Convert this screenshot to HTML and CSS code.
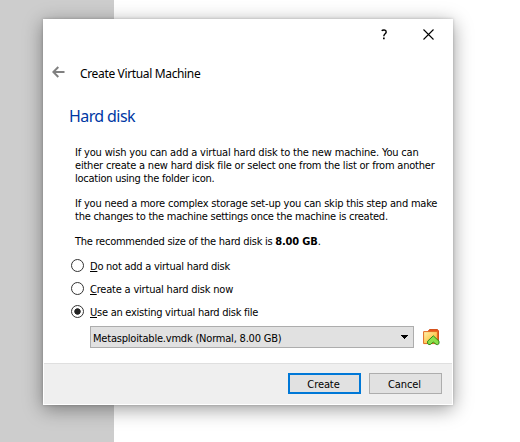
FILE: index.html
```html
<!DOCTYPE html>
<html lang="en">
<head>
<meta charset="utf-8">
<title>Create Virtual Machine</title>
<link rel="stylesheet" href="styles.css">
</head>
<body>
<main class="dialog">
  <header class="titlebar">
    <svg class="help" width="8" height="11" viewBox="0 0 8 11"><path d="M1.7 1.8C2.5 .9 6.2.3 6.2 2.9C6.2 4.8 3.8 4.7 3.8 7.2" fill="none" stroke="#000" stroke-width="1.4"/><path d="M3 8.6h1.7v1.6H3z"/></svg>
    <svg class="close" width="11" height="11" viewBox="0 0 11 11"><path d="M.5.5l10 10M10.5.5l-10 10" stroke="#000" stroke-width="1.1"/></svg>
  </header>
  <div class="heading">
    <svg width="13" height="12" viewBox="0 0 13 12"><path d="M12.5 6H1.5M6.3 1L1.3 6l5 5" fill="none" stroke="#808080" stroke-width="2"/></svg>
    <span class="name">Create Virtual Machine</span>
  </div>
  <h1>Hard disk</h1>
  <section class="content">
    <p><span class="snug">If you wish you can add a virtual hard disk to the new machine. You can</span><br><span class="tight">either create a new hard disk file or select one from the list or from another</span><br><span class="tighter">location using the folder icon.</span></p>
    <p><span class="tight">If you need a more complex storage set-up you can skip this step and make</span><br><span class="tighter">the changes to the machine settings once the machine is created.</span></p>
    <p><span class="tighter">The recommended size of the hard disk is </span><b class="snug">8.00 GB</b>.</p>
    <div class="options">
      <label><i class="radio"></i><span class="tighter"><u>D</u>o not add a virtual hard disk</span></label>
      <label><i class="radio"></i><span class="tight"><u>C</u>reate a virtual hard disk now</span></label>
      <label><i class="radio checked"></i><span class="tighter"><u>U</u>se an existing virtual hard disk file</span></label>
    </div>
    <div class="file">
      <div class="combo"><span class="tight">Metasploitable.vmdk (Normal, 8.00 GB)</span><svg width="7" height="4" viewBox="0 0 7 4" shape-rendering="crispEdges"><path d="M0 0h7v1H6v1H5v1H4v1H3V3H2V2H1V1H0z"/></svg></div>
      <svg class="folder" width="17" height="17" viewBox="0 0 17 17">
        <defs><linearGradient id="g" x1="0" y1="0" x2="1" y2="1"><stop offset="0" stop-color="#fff3b0"/><stop offset=".5" stop-color="#ffd060"/><stop offset="1" stop-color="#f9a828"/></linearGradient></defs>
        <path d="M5 2.5L6.5.5h8l1 1.5v12H5z" fill="#e9541b" stroke="#d5521c"/>
        <path d="M.6 2.6h13.8v12H.6z" fill="url(#g)" stroke="#e26a22"/>
        <path d="M10.3 6.8l5.7 5.4v2.4q-1.3 1.6-2.8.8l-2.9-2.3-2.9 2.3q-1.5.8-2.8-.8v-2.4z" fill="#8be04a" stroke="#2e8a1c" stroke-linejoin="round"/>
      </svg>
    </div>
  </section>
  <footer>
    <button class="primary">Create</button>
    <button>Cancel</button>
  </footer>
</main>
</body>
</html>
```
FILE: styles.css
```css
* { box-sizing: border-box; }
body {
  margin: 0;
  width: 520px;
  height: 442px;
  overflow: hidden;
  padding: 19px 0 0 43px;
  background: linear-gradient(to right, #cdcdcd 114px, #fff 114px);
  font: 11px/13px "DejaVu Sans Condensed", "DejaVu Sans", sans-serif;
  color: #000;
}
.dialog {
  width: 410px;
  height: 386px;
  display: flex;
  flex-direction: column;
  background: #fff;
  border: 1px solid #fff;
  box-shadow: 0 4px 18px rgba(0, 0, 0, .4), 0 0 3px rgba(0, 0, 0, .2);
}
.titlebar {
  height: 38px;
  display: flex;
  justify-content: flex-end;
  align-items: flex-start;
  gap: 35px;
  padding: 9px 18px 0 0;
}
.heading {
  height: 32px;
  display: flex;
  align-items: flex-start;
  gap: 15px;
  padding: 8px 0 0 8px;
}
.name {
  font: 12px/16px "Noto Sans", sans-serif;
  letter-spacing: -.35px;
}
h1 {
  margin: 0;
  height: 36px;
  padding: 16px 0 0 25px;
  font: 16px/20px "Noto Sans", sans-serif;
  letter-spacing: -.6px;
  color: #0038a4;
}
.snug { letter-spacing: -.17px; }
.tight { letter-spacing: -.2px; }
.tighter { letter-spacing: -.25px; }
.content { flex: 1; padding: 20px 11px 0 31px; white-space: nowrap; }
p { margin: 0 0 12px; }
.options { display: flex; flex-direction: column; gap: 10px; margin: 12px 0 0 -4px; }
label { display: flex; align-items: center; gap: 6px; height: 13px; }
.radio {
  width: 13px;
  height: 13px;
  margin-bottom: 2px;
  border: 1px solid #333;
  border-radius: 50%;
  background: #fff;
}
.checked { background: radial-gradient(circle, #222 2.8px, #fff 3.6px); }
.file { display: flex; align-items: center; gap: 9px; margin: 7px 0 0 15px; }
.combo {
  width: 324px;
  height: 22px;
  display: flex;
  align-items: center;
  justify-content: space-between;
  padding: 1px 5px 0 2px;
  border: 1px solid #adadad;
  background: #e1e1e1;
}
.combo span { padding-top: 1px; }
.combo svg { margin-bottom: 1px; }
footer {
  height: 41px;
  display: flex;
  justify-content: flex-end;
  gap: 8px;
  padding: 9px 10px 0;
  background: #efefef;
  border-top: 1px solid #dfdfdf;
}
button {
  width: 73px;
  height: 21px;
  padding: 1px 2px 0 0;
  font: inherit;
  letter-spacing: -.1px;
  color: #000;
  background: #e1e1e1;
  border: 1px solid #adadad;
}
.primary { border: 2px solid #0078d7; }
```
